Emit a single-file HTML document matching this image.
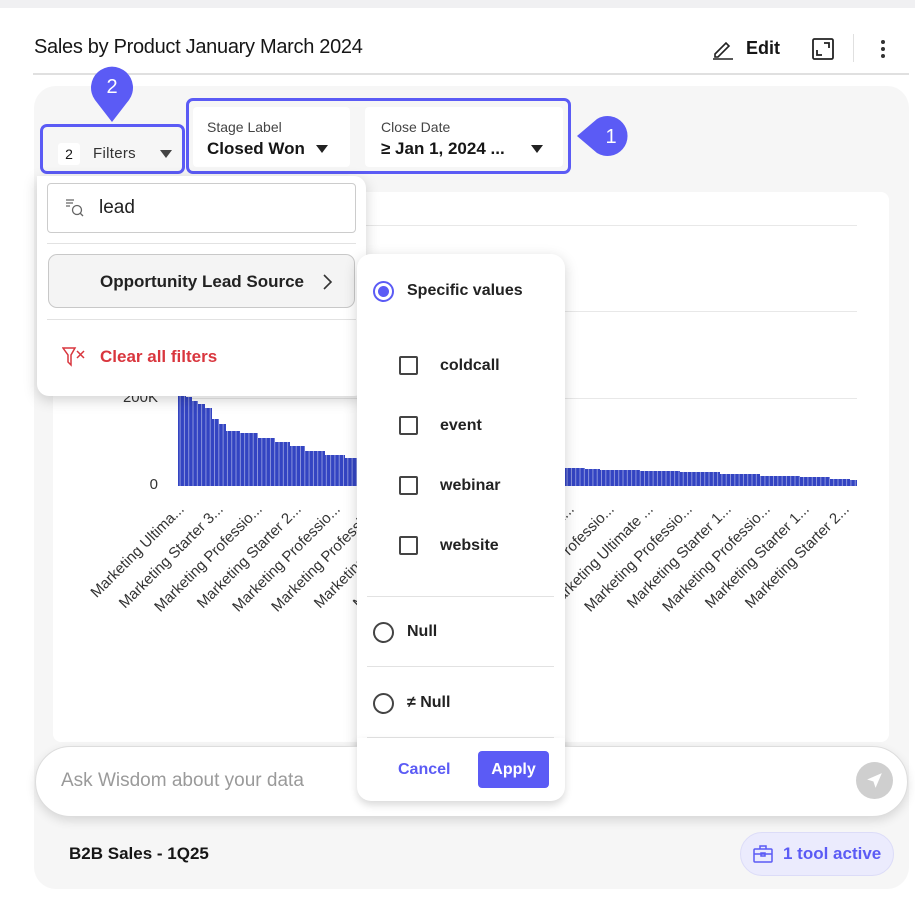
<!DOCTYPE html>
<html><head><meta charset="utf-8"><style>
*{box-sizing:border-box;margin:0;padding:0}
body{width:915px;height:897px;background:#fff;font-family:"Liberation Sans",sans-serif;color:#161616;position:relative;overflow:hidden}
.abs{position:absolute}
.outline{border:3px solid #5b5bf5;border-radius:7px}
.pop{background:#fff;box-shadow:0 4px 14px rgba(0,0,0,.18);}
.hr{position:absolute;height:1px;background:#e2e2e2}
.cb{position:absolute;width:19px;height:19px;border:2px solid #444;border-radius:2px}
.lbl{position:absolute;font-size:16px;font-weight:bold;color:#222}
.rad{position:absolute;width:21px;height:21px;border:2px solid #444;border-radius:50%}
</style></head><body>
<div class="abs" style="left:0;top:0;width:915px;height:8px;background:#f0f0f2"></div>
<div class="abs" style="left:34px;top:36px;font-size:20px;letter-spacing:-0.3px;color:#161616">Sales by Product January March 2024</div>
<svg class="abs" style="left:711px;top:37px" width="24" height="24" viewBox="0 0 24 24" fill="none" stroke="#222" stroke-width="1.6"><path d="M4 17 L15 6 L18 9 L7 20 L4 20 Z"/><path d="M2 22 H22"/></svg>
<div class="abs" style="left:746px;top:38px;font-size:18px;font-weight:bold">Edit</div>
<svg class="abs" style="left:811px;top:37px" width="24" height="24" viewBox="0 0 24 24" fill="none" stroke="#222" stroke-width="1.8"><rect x="2" y="2" width="20" height="20" rx="1.5"/><path d="M13 6 H18 V11 M11 18 H6 V13"/></svg>
<div class="abs" style="left:853px;top:34px;width:1px;height:28px;background:#e0e0e0"></div>
<div class="abs" style="left:881px;top:40px;width:4px;height:4px;border-radius:50%;background:#333;box-shadow:0 7px 0 #333,0 14px 0 #333"></div>
<div class="abs" style="left:33px;top:73px;width:876px;height:2px;background:#e0e0e0"></div>
<div class="abs" style="left:34px;top:86px;width:875px;height:803px;background:#f6f6f6;border-radius:22px"></div>
<div class="abs" style="left:53px;top:192px;width:836px;height:550px;background:#fff;border-radius:8px"></div>
<div class="abs" style="left:178px;top:225px;width:679px;height:1px;background:#e8e8e8"></div>
<div class="abs" style="left:178px;top:311px;width:679px;height:1px;background:#e8e8e8"></div>
<div class="abs" style="left:178px;top:398px;width:679px;height:1px;background:#e8e8e8"></div>
<div class="abs" style="left:110px;top:389px;width:48px;text-align:right;font-size:15px;color:#333">200K</div>
<div class="abs" style="left:110px;top:476px;width:48px;text-align:right;font-size:15px;color:#333">0</div>
<svg class="abs" style="left:0;top:0" width="915" height="897">
<defs><pattern id="p" width="4.3" height="10" patternUnits="userSpaceOnUse"><rect width="3.6" height="10" fill="#3344c2"/><rect x="3.6" width="0.7" height="10" fill="#8a94dd"/></pattern></defs>
<path fill="url(#p)" d="M178,486 V392 H186 V397 H192 V401 H198 V404 H205 V408 H212 V419 H219 V424 H226 V431 H240 V433 H258 V438 H275 V442 H290 V446 H305 V451 H325 V455 H345 V458 H365 V460 H560 V468 H585 V469 H600 V470 H640 V471 H680 V472 H720 V474 H760 V476 H800 V477 H830 V479 H850 V480 H857 V486 Z"/>
<g font-family="Liberation Sans" font-size="15" fill="#333" text-anchor="end">
<text transform="translate(185,510) rotate(-45)">Marketing Ultima...</text>
<text transform="translate(224,510) rotate(-45)">Marketing Starter 3...</text>
<text transform="translate(263,510) rotate(-45)">Marketing Professio...</text>
<text transform="translate(302,510) rotate(-45)">Marketing Starter 2...</text>
<text transform="translate(341,510) rotate(-45)">Marketing Professio...</text>
<text transform="translate(380,510) rotate(-45)">Marketing Professio...</text>
<text transform="translate(419,510) rotate(-45)">Marketing Starter 1...</text>
<text transform="translate(458,510) rotate(-45)">Marketing Starter 1...</text>
<text transform="translate(497,510) rotate(-45)">Marketing Starter 1...</text>
<text transform="translate(536,510) rotate(-45)">Marketing Starter 1...</text>
<text transform="translate(575,510) rotate(-45)">Marketing Starter 1...</text>
<text transform="translate(615,510) rotate(-45)">Marketing Professio...</text>
<text transform="translate(654,510) rotate(-45)">Marketing Ultimate ...</text>
<text transform="translate(693,510) rotate(-45)">Marketing Professio...</text>
<text transform="translate(732,510) rotate(-45)">Marketing Starter 1...</text>
<text transform="translate(771,510) rotate(-45)">Marketing Professio...</text>
<text transform="translate(810,510) rotate(-45)">Marketing Starter 1...</text>
<text transform="translate(850,510) rotate(-45)">Marketing Starter 2...</text>
</g></svg>

<!-- filters -->
<div class="abs outline" style="left:40px;top:124px;width:145px;height:50px"></div>
<div class="abs" style="left:58px;top:143px;width:22px;height:22px;background:#fff;border-radius:3px;font-size:14px;text-align:center;line-height:22px">2</div>
<div class="abs" style="left:93px;top:145px;font-size:15px;color:#333;letter-spacing:.3px">Filters</div>
<div class="abs" style="left:160px;top:150px;border-left:6px solid transparent;border-right:6px solid transparent;border-top:8px solid #444"></div>
<div class="abs outline" style="left:186px;top:98px;width:385px;height:76px"></div>
<div class="abs" style="left:193px;top:107px;width:157px;height:60px;background:#fff;border-radius:4px"></div>
<div class="abs" style="left:365px;top:107px;width:198px;height:60px;background:#fff;border-radius:4px"></div>
<div class="abs" style="left:207px;top:119px;font-size:14px;color:#444">Stage Label</div>
<div class="abs" style="left:207px;top:139px;font-size:17px;font-weight:bold">Closed Won</div>
<div class="abs" style="left:316px;top:145px;border-left:6px solid transparent;border-right:6px solid transparent;border-top:8px solid #222"></div>
<div class="abs" style="left:381px;top:119px;font-size:14px;color:#444">Close Date</div>
<div class="abs" style="left:381px;top:139px;font-size:17px;font-weight:bold">≥ Jan 1, 2024 ...</div>
<div class="abs" style="left:531px;top:145px;border-left:6px solid transparent;border-right:6px solid transparent;border-top:8px solid #222"></div>
<!-- pins -->
<svg class="abs" style="left:0;top:0" width="915" height="200">
<path d="M112,122 L95,100 A21,21 0 1 1 129,100 Z" fill="#5b5bf5"/>
<text x="112" y="93" fill="#fff" font-size="20" text-anchor="middle" font-family="Liberation Sans">2</text>
<path d="M577,136 L597,119 A20,20 0 1 1 597,153 Z" fill="#5b5bf5"/>
<text x="611" y="143" fill="#fff" font-size="20" text-anchor="middle" font-family="Liberation Sans">1</text>
</svg>

<!-- filter popover -->
<div class="abs pop" style="left:37px;top:176px;width:329px;height:220px;border-radius:0 12px 12px 12px"></div>
<div class="abs" style="left:47px;top:183px;width:309px;height:50px;border:1px solid #ccc;border-radius:4px"></div>
<svg class="abs" style="left:65px;top:198px" width="20" height="20" viewBox="0 0 20 20" fill="none" stroke="#666" stroke-width="1.3"><path d="M1 2H9M1 5H8M1 8H5"/><circle cx="12" cy="12" r="4.5"/><path d="M15 15L18 18"/></svg>
<div class="abs" style="left:99px;top:197px;font-size:19px;color:#222">lead</div>
<div class="hr" style="left:47px;top:243px;width:309px"></div>
<div class="abs" style="left:48px;top:254px;width:307px;height:54px;background:#f4f4f4;border:1px solid #c8c8c8;border-radius:9px"></div>
<div class="abs" style="left:100px;top:272px;font-size:17px;font-weight:bold;color:#222">Opportunity Lead Source</div>
<svg class="abs" style="left:320px;top:273px" width="14" height="18" viewBox="0 0 14 18" fill="none" stroke="#333" stroke-width="1.6"><path d="M4 2L11 9L4 16"/></svg>
<div class="hr" style="left:47px;top:319px;width:309px"></div>
<svg class="abs" style="left:62px;top:346px" width="24" height="22" viewBox="0 0 24 22" fill="none" stroke="#d9363e" stroke-width="1.5"><path d="M1 2H13L9 9V19L6 16V9Z"/><path d="M15 5L22 12M22 5L15 12"/></svg>
<div class="abs" style="left:100px;top:347px;font-size:17px;font-weight:bold;color:#d9363e">Clear all filters</div>

<!-- values popover -->
<div class="abs pop" style="left:357px;top:254px;width:208px;height:547px;border-radius:14px"></div>
<div class="abs" style="left:373px;top:281px;width:21px;height:21px;border:2px solid #5b5bf5;border-radius:50%"></div>
<div class="abs" style="left:378px;top:286px;width:11px;height:11px;background:#5b5bf5;border-radius:50%"></div>
<div class="lbl" style="left:407px;top:282px">Specific values</div>
<div class="cb" style="left:399px;top:356px"></div><div class="lbl" style="left:440px;top:357px">coldcall</div>
<div class="cb" style="left:399px;top:416px"></div><div class="lbl" style="left:440px;top:417px">event</div>
<div class="cb" style="left:399px;top:476px"></div><div class="lbl" style="left:440px;top:477px">webinar</div>
<div class="cb" style="left:399px;top:536px"></div><div class="lbl" style="left:440px;top:537px">website</div>
<div class="hr" style="left:367px;top:596px;width:187px"></div>
<div class="rad" style="left:373px;top:622px"></div><div class="lbl" style="left:407px;top:623px">Null</div>
<div class="hr" style="left:367px;top:666px;width:187px"></div>
<div class="rad" style="left:373px;top:693px"></div><div class="lbl" style="left:407px;top:694px">≠ Null</div>
<div class="hr" style="left:367px;top:737px;width:187px"></div>

<!-- ask bar -->
<div class="abs" style="left:35px;top:746px;width:873px;height:71px;background:#fff;border:1px solid #ddd;border-radius:36px;box-shadow:0 4px 10px rgba(0,0,0,.12)"></div>
<div class="abs" style="left:61px;top:770px;font-size:19px;color:#9a9a9a">Ask Wisdom about your data</div>
<div class="abs" style="left:856px;top:762px;width:37px;height:37px;border-radius:50%;background:#cfcfcf"></div>
<svg class="abs" style="left:864px;top:770px" width="21" height="21" viewBox="0 0 20 20"><path d="M17 3L3 9L9 11L11 17Z" fill="#fff"/></svg>
<div class="abs" style="left:357px;top:738px;width:208px;height:63px;background:#fff;border-radius:0 0 14px 14px;box-shadow:0 4px 8px rgba(0,0,0,.15)"></div>
<div class="abs" style="left:398px;top:761px;font-size:16px;font-weight:bold;color:#5b5bf5">Cancel</div>
<div class="abs" style="left:478px;top:751px;width:71px;height:37px;background:#5b5bf5;border-radius:4px;color:#fff;font-size:16px;font-weight:bold;text-align:center;line-height:37px">Apply</div>

<div class="abs" style="left:69px;top:844px;font-size:17px;font-weight:bold">B2B Sales - 1Q25</div>
<div class="abs" style="left:740px;top:832px;width:154px;height:44px;background:#ebebfd;border:1px solid #dcdcf8;border-radius:22px"></div>
<svg class="abs" style="left:753px;top:845px" width="20" height="18" viewBox="0 0 20 18" fill="none" stroke="#5b5bf5" stroke-width="1.5"><rect x="1" y="4" width="18" height="13" rx="1"/><path d="M7 4V1H13V4M1 9H19"/><rect x="8" y="8" width="4" height="3"/></svg>
<div class="abs" style="left:783px;top:844px;font-size:17px;font-weight:bold;color:#5b5bf5">1 tool active</div>
</body></html>
